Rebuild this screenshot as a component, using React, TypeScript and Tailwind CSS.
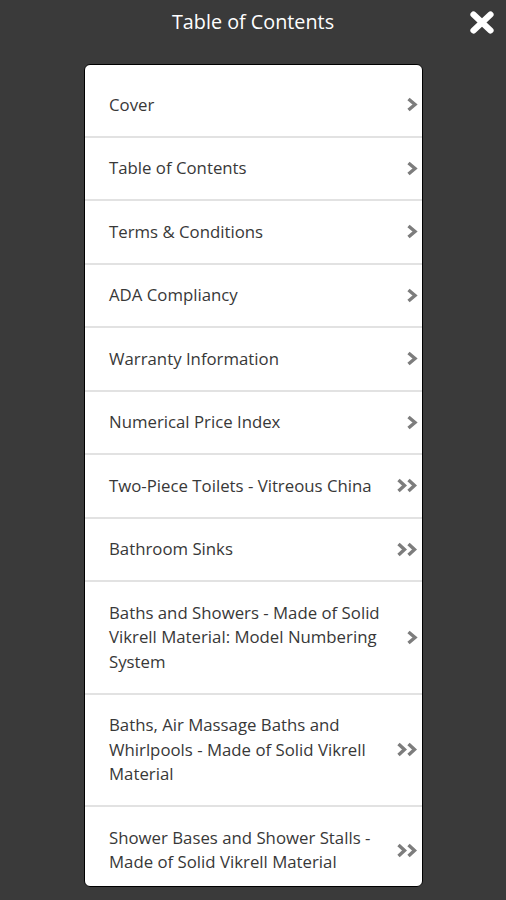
import React from "react";

type Item = { label: string; double?: boolean };

const items: Item[] = [
  { label: "Cover" },
  { label: "Table of Contents" },
  { label: "Terms & Conditions" },
  { label: "ADA Compliancy" },
  { label: "Warranty Information" },
  { label: "Numerical Price Index" },
  { label: "Two-Piece Toilets - Vitreous China", double: true },
  { label: "Bathroom Sinks", double: true },
  { label: "Baths and Showers - Made of Solid Vikrell Material: Model Numbering System" },
  { label: "Baths, Air Massage Baths and Whirlpools - Made of Solid Vikrell Material", double: true },
  { label: "Shower Bases and Shower Stalls - Made of Solid Vikrell Material", double: true },
];

function Chevron() {
  return (
    <svg width="12" height="15" viewBox="0 0 12 15" className="block">
      <polyline points="2.5,2 9,7.5 2.5,13" fill="none" stroke="#7d7d7d" strokeWidth="3.4" strokeLinecap="butt" strokeLinejoin="miter" />
    </svg>
  );
}

function DoubleChevron() {
  return (
    <svg width="22" height="15" viewBox="0 0 22 15" className="block">
      <polyline points="2.5,2 8.5,7.5 2.5,13" fill="none" stroke="#7d7d7d" strokeWidth="3.4" strokeLinecap="butt" strokeLinejoin="miter" />
      <polyline points="12.5,2 18.5,7.5 12.5,13" fill="none" stroke="#7d7d7d" strokeWidth="3.4" strokeLinecap="butt" strokeLinejoin="miter" />
    </svg>
  );
}

export default function App() {
  return (
    <div
      className="w-[506px] h-[900px] bg-[#3a3a3a] overflow-hidden flex flex-col"
      style={{ fontFamily: '"Open Sans", "Noto Sans", sans-serif' }}
    >
      <div className="relative h-[64px] flex justify-center">
        <div className="pt-[7px] text-white text-[19.8px] leading-[30px]">Table of Contents</div>
        <div className="absolute right-[11px] top-[10px]">
          <svg width="26" height="25" viewBox="0 0 26 25">
            <line x1="4.5" y1="4.5" x2="21.5" y2="20.5" stroke="#fff" strokeWidth="6.2" strokeLinecap="round" />
            <line x1="21.5" y1="4.5" x2="4.5" y2="20.5" stroke="#fff" strokeWidth="6.2" strokeLinecap="round" />
          </svg>
        </div>
      </div>
      <div className="ml-[84px] w-[339px] h-[823px] bg-white border border-black rounded-[6px] overflow-hidden pt-[9px]">
        {items.map((it, i) => (
          <div
            key={i}
            className={`flex items-center pl-6 pr-[4px] py-[18.5px] ${i < items.length - 1 ? "border-b-2 border-[#e2e2e2]" : ""}`}
          >
            <div className="w-[284px] text-[16.8px] leading-[24.5px] text-[#383838]">{it.label}</div>
            <div className="flex-1 flex justify-end">
              {it.double ? <DoubleChevron /> : <Chevron />}
            </div>
          </div>
        ))}
      </div>
    </div>
  );
}
